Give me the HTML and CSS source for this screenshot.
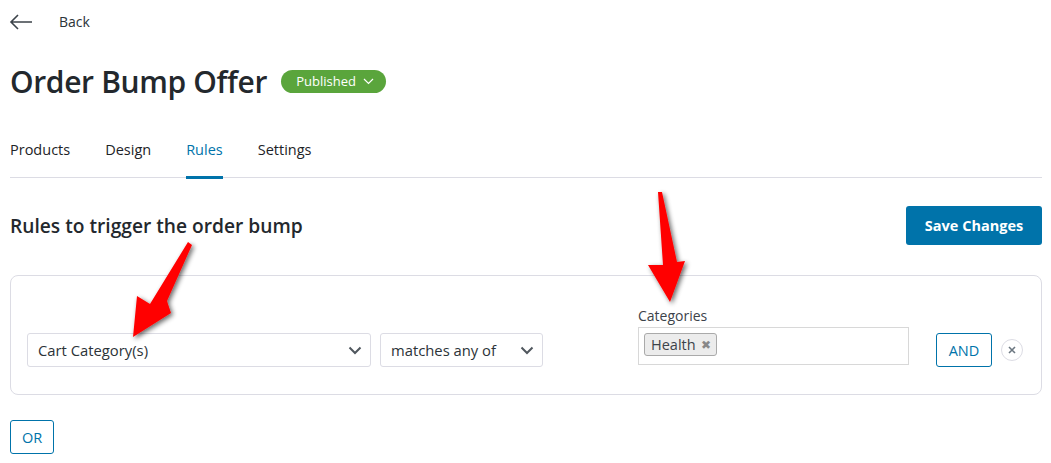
FILE: index.html
```html
<!DOCTYPE html>
<html>
<head>
<meta charset="utf-8">
<link rel="stylesheet" href="styles.css">
</head>
<body>
<div class="page">
  <div class="back">
    <svg class="back-arrow" width="24" height="16" viewBox="0 0 24 16"><path d="M23 8H2M9 1L2 8l7 7" fill="none" stroke="#3c434a" stroke-width="1.6"/></svg>
    <span class="back-text">Back</span>
  </div>
  <div class="title-row">
    <h1 class="title">Order Bump Offer</h1>
    <span class="badge">Published <svg width="11" height="7" viewBox="0 0 11 7"><path d="M1 1l4.5 4.5L10 1" fill="none" stroke="#fff" stroke-width="1.2"/></svg></span>
  </div>
  <nav class="tabs">
    <a class="tab">Products</a>
    <a class="tab">Design</a>
    <a class="tab active">Rules</a>
    <a class="tab">Settings</a>
  </nav>
  <div class="section-head">
    <h2 class="section-title">Rules to trigger the order bump</h2>
    <button class="save">Save Changes</button>
  </div>
  <div class="rule-box">
    <div class="rule-row">
      <div class="select sel-cat"><span>Cart Category(s)</span><svg class="chev" width="14" height="9" viewBox="0 0 14 9"><path d="M1.5 1.5l5.5 5.5 5.5-5.5" fill="none" stroke="#50575e" stroke-width="2"/></svg></div>
      <div class="select sel-match"><span>matches any of</span><svg class="chev" width="14" height="9" viewBox="0 0 14 9"><path d="M1.5 1.5l5.5 5.5 5.5-5.5" fill="none" stroke="#50575e" stroke-width="2"/></svg></div>
      <div class="field">
        <label class="field-label">Categories</label>
        <div class="tag-input"><span class="tag">Health <span class="tag-x">✖</span></span></div>
      </div>
      <button class="and">AND</button>
      <span class="remove"><svg width="10" height="10" viewBox="0 0 10 10"><path d="M2 2l6 6M8 2l-6 6" stroke="#6c7781" stroke-width="1.6"/></svg></span>
    </div>
  </div>
  <button class="or">OR</button>
</div>
<svg class="arrows" width="1051" height="463" viewBox="0 0 1051 463">
  <defs>
    <filter id="sh" x="-50%" y="-50%" width="200%" height="200%">
      <feGaussianBlur in="SourceAlpha" stdDeviation="2.5"/>
      <feOffset dx="2" dy="2"/>
      <feComponentTransfer><feFuncA type="linear" slope="0.6"/></feComponentTransfer>
      <feMerge><feMergeNode/><feMergeNode in="SourceGraphic"/></feMerge>
    </filter>
  </defs>
  <path filter="url(#sh)" fill="#ff0000" d="M188 242 L192 245 L167 301 L171 313 L133 337 L137 296 L150 304 Z"/>
  <path filter="url(#sh)" fill="#ff0000" d="M658 192 L662 192 L677 262 L685 261 L670 302 L648 265 L663 265 Z"/>
</svg>
</body>
</html>
```
FILE: styles.css
```css
* { box-sizing: border-box; }
html, body { margin: 0; padding: 0; background: #fff; }
body {
  font-family: "Open Sans", "Noto Sans", sans-serif;
  color: #23282d;
  width: 1051px;
  height: 463px;
  overflow: hidden;
  position: relative;
}
.page { padding: 0 9px 0 10px; }
.back { display: flex; align-items: center; height: 42px; padding-top: 1px; }
.back-arrow { margin-left: -1px; }
.back-text { margin-left: 26px; font-size: 14px; color: #2c3338; }
.title-row { display: flex; align-items: center; height: 78px; }
.title { margin: 0; font-size: 30px; font-weight: 600; color: #23282d; letter-spacing: -0.35px; }
.badge {
  margin-left: 14px; background: #5aa53c; color: #fff; font-size: 13px;
  border-radius: 12px; height: 23px; padding: 0 12px 0 15px;
  display: inline-flex; align-items: center; gap: 7px;
}
.tabs { display: flex; gap: 35px; border-bottom: 1px solid #dcdce4; height: 58px; align-items: stretch; }
.tab { font-size: 14.5px; color: #1d2327; display: flex; align-items: center; padding-top: 2px; border-bottom: 3px solid transparent; margin-bottom: -2px; }
.tab.active { color: #0073aa; border-bottom-color: #0073aa; }
.section-head { display: flex; justify-content: space-between; align-items: center; padding-top: 28px; }
.section-title { margin: 0; font-size: 19.2px; font-weight: 600; color: #23282d; }
.save {
  background: #0073aa; color: #fff; border: 0; border-radius: 3px;
  font-family: inherit; font-size: 14.5px; font-weight: 700;
  width: 136px; height: 39px;
}
.rule-box {
  margin-top: 30px; border: 1px solid #dcdce4; border-radius: 8px; height: 120px;
  padding: 0 16px;
}
.rule-row { display: flex; align-items: flex-end; height: 91px; }
.select {
  height: 34px; border: 1px solid #dcdce4; border-radius: 3px; display: flex;
  align-items: center; justify-content: space-between; padding: 0 8px 0 10px;
  font-size: 14.8px; color: #2c3338;
}
.sel-cat { width: 344px; }
.sel-match { width: 163px; margin-left: 9px; }
.field { margin-left: 95px; display: flex; flex-direction: column; margin-bottom: 2px; }
.field-label { font-size: 14px; color: #3c434a; margin-bottom: 2px; }
.tag-input { width: 271px; height: 38px; border: 1px solid #d8d8d8; padding: 5px 5px; }
.tag {
  display: inline-flex; align-items: center; gap: 5px; height: 23px; padding: 0 5px 0 6px;
  background: #ececec; border: 1px solid #aaa; border-radius: 3px; font-size: 14.5px; color: #3c434a;
}
.tag-x { font-size: 12px; color: #888; }
.and {
  margin-left: 27px; width: 56px; height: 34px; border: 1px solid #0073aa; border-radius: 3px;
  background: #fff; color: #0073aa; font-family: inherit; font-size: 14.5px;
}
.remove {
  margin-left: 9px; width: 22px; height: 22px; border: 1px solid #dcdce4; border-radius: 50%;
  display: inline-flex; align-items: center; justify-content: center; margin-bottom: 6px;
}
.or {
  margin-top: 25px; width: 44px; height: 34px; border: 1px solid #0073aa; border-radius: 3px;
  background: #fff; color: #0073aa; font-family: inherit; font-size: 14.5px; padding: 0;
}
.arrows { position: absolute; left: 0; top: 0; pointer-events: none; }
```
